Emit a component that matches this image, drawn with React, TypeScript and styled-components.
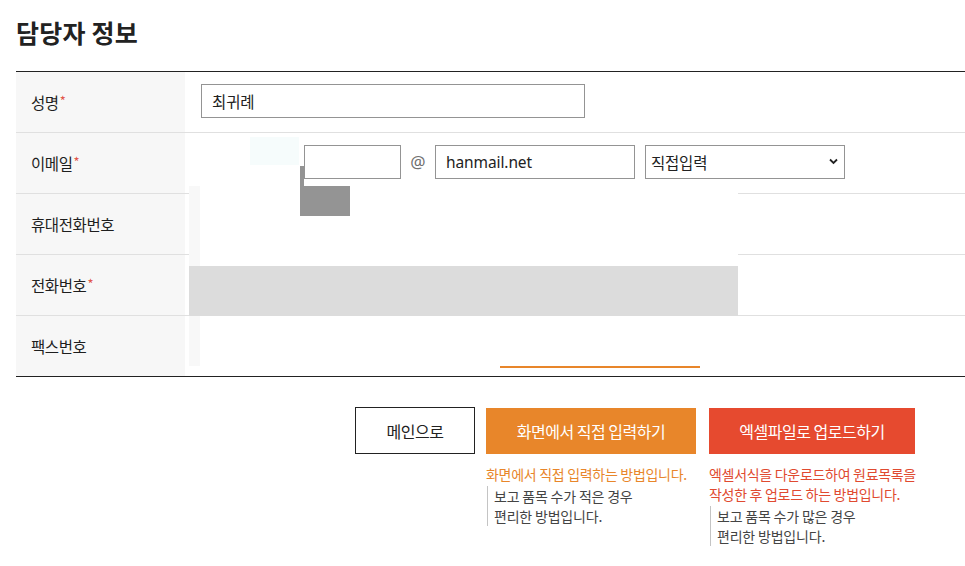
import React from "react";
import styled, { createGlobalStyle } from "styled-components";

const GlobalStyle = createGlobalStyle`
  * { box-sizing: border-box; }
  html, body { margin: 0; padding: 0; background: #fff; }
  body {
    font-family: "Noto Sans CJK KR", "Noto Sans", sans-serif;
    color: #222;
  }
`;

const Page = styled.div`
  position: relative;
  width: 965px;
  height: 566px;
  padding: 14px 0 0 16px;
  overflow: hidden;
`;

const Title = styled.h2`
  margin: 0 0 21px;
  font-size: 25px;
  line-height: 36px;
  font-weight: 700;
  letter-spacing: 0.2px;
  color: #222;
`;

const Table = styled.div`
  border-top: 1px solid #222;
  border-bottom: 1px solid #222;
`;

const Row = styled.div`
  display: grid;
  grid-template-columns: 169px 1fr;
  height: 61px;
  border-bottom: 1px solid #e0e0e0;
  &:last-child {
    height: 60px;
    border-bottom: none;
  }
`;

const Label = styled.div`
  display: flex;
  align-items: center;
  padding-left: 15px;
  background: #f7f7f7;
  font-size: 15.5px;
  letter-spacing: -0.4px;
  color: #1e1e1e;
`;

const Required = styled.span`
  color: #e2564a;
  font-size: 13px;
  margin-left: 1px;
  position: relative;
  top: -2px;
`;

const Value = styled.div`
  display: flex;
  align-items: flex-start;
  padding: 12px 0 0 16px;
`;

const TextInput = styled.input<{ $width: number; $offset?: number }>`
  width: ${(p) => p.$width}px;
  height: 34px;
  margin-left: ${(p) => p.$offset ?? 0}px;
  padding: 0 10px;
  border: 1px solid #949494;
  border-radius: 0;
  background: #fff;
  font-family: "Noto Sans", "Noto Sans CJK KR", sans-serif;
  font-size: 15.5px;
  letter-spacing: -0.1px;
  color: #222;
  outline: none;
`;

const At = styled.span`
  width: 34px;
  height: 34px;
  line-height: 33px;
  text-align: center;
  font-family: "Noto Sans", sans-serif;
  font-size: 17px;
  color: #707070;
`;

const SelectWrap = styled.div`
  position: relative;
  width: 200px;
  height: 34px;
  margin-left: 10px;
`;

const Select = styled.select`
  appearance: none;
  width: 100%;
  height: 100%;
  padding: 0 0 0 5px;
  border: 1px solid #949494;
  border-radius: 0;
  background: #fff;
  font-family: "Noto Sans CJK KR", sans-serif;
  font-size: 15.5px;
  letter-spacing: -0.2px;
  color: #222;
  outline: none;
`;

const Chevron = styled.svg`
  position: absolute;
  right: 7px;
  top: 13px;
  width: 9px;
  height: 7px;
  pointer-events: none;
`;

/* Fragments of a layer stacked above the form */
const Layer = styled.div<{ $x: number; $y: number; $w: number; $h: number; $bg: string }>`
  position: absolute;
  left: ${(p) => p.$x}px;
  top: ${(p) => p.$y}px;
  width: ${(p) => p.$w}px;
  height: ${(p) => p.$h}px;
  background: ${(p) => p.$bg};
`;

const Panel = styled.div`
  position: absolute;
  left: 189px;
  top: 186px;
  width: 549px;
  height: 180px;
  display: flex;
  flex-direction: column;
  background: #fff;
`;

const PanelSection = styled.div<{ $h: number }>`
  height: ${(p) => p.$h}px;
  border-left: 11px solid #f8f8f8;
  background: #fff;
`;

const PanelBand = styled.div`
  height: 50px;
  background: #dcdcdc;
`;

const Actions = styled.div`
  display: flex;
  align-items: flex-start;
  margin-top: 30px;
  padding-left: 339px;
`;

const ActionCol = styled.div<{ $w: number; $gap: number }>`
  display: flex;
  flex-direction: column;
  width: ${(p) => p.$w}px;
  margin-right: ${(p) => p.$gap}px;
`;

const Button = styled.button<{ $variant: "plain" | "orange" | "red" }>`
  display: flex;
  align-items: center;
  justify-content: center;
  width: 100%;
  height: ${(p) => (p.$variant === "plain" ? 47 : 46)}px;
  margin-top: ${(p) => (p.$variant === "plain" ? 0 : 1)}px;
  padding: 0;
  border: ${(p) => (p.$variant === "plain" ? "1px solid #222" : "none")};
  border-radius: 0;
  background: ${(p) =>
    p.$variant === "orange" ? "#e8862a" : p.$variant === "red" ? "#e64a2f" : "#fff"};
  color: ${(p) => (p.$variant === "plain" ? "#222" : "#fff")};
  font-family: "Noto Sans CJK KR", sans-serif;
  font-size: 16px;
  letter-spacing: -0.5px;
  cursor: pointer;
`;

const Desc = styled.p<{ $color: string }>`
  margin: 10px 0 0;
  font-size: 14px;
  line-height: 20px;
  letter-spacing: -0.3px;
  color: ${(p) => p.$color};
  white-space: nowrap;
`;

const Note = styled.p`
  margin: 2px 0 0 1px;
  padding-left: 6px;
  border-left: 1px solid #c4c4c4;
  font-size: 14px;
  line-height: 20px;
  letter-spacing: -0.2px;
  color: #444;
  white-space: nowrap;
`;

export default function App() {
  return (
    <>
      <GlobalStyle />
      <Page>
        <Title>담당자 정보</Title>
        <Table>
          <Row>
            <Label>
              성명<Required>*</Required>
            </Label>
            <Value>
              <TextInput $width={384} defaultValue="최귀례" />
            </Value>
          </Row>
          <Row>
            <Label>
              이메일<Required>*</Required>
            </Label>
            <Value>
              <TextInput $width={97} $offset={103} defaultValue="" />
              <At>@</At>
              <TextInput $width={200} defaultValue="hanmail.net" />
              <SelectWrap>
                <Select defaultValue="direct">
                  <option value="direct">직접입력</option>
                  <option value="naver">naver.com</option>
                  <option value="hanmail">hanmail.net</option>
                </Select>
                <Chevron viewBox="0 0 9 7">
                  <path d="M1 1.5 L4.5 5 L8 1.5" fill="none" stroke="#222" strokeWidth="1.8" />
                </Chevron>
              </SelectWrap>
            </Value>
          </Row>
          <Row>
            <Label>휴대전화번호</Label>
            <Value />
          </Row>
          <Row>
            <Label>
              전화번호<Required>*</Required>
            </Label>
            <Value />
          </Row>
          <Row>
            <Label>팩스번호</Label>
            <Value />
          </Row>
        </Table>

        <Actions>
          <ActionCol $w={120} $gap={11}>
            <Button $variant="plain">메인으로</Button>
          </ActionCol>
          <ActionCol $w={210} $gap={13}>
            <Button $variant="orange">화면에서 직접 입력하기</Button>
            <Desc $color="#e8862a">화면에서 직접 입력하는 방법입니다.</Desc>
            <Note>
              보고 품목 수가 적은 경우
              <br />
              편리한 방법입니다.
            </Note>
          </ActionCol>
          <ActionCol $w={206} $gap={0}>
            <Button $variant="red">엑셀파일로 업로드하기</Button>
            <Desc $color="#e04a30">
              엑셀서식을 다운로드하여 원료목록을
              <br />
              작성한 후 업로드 하는 방법입니다.
            </Desc>
            <Note>
              보고 품목 수가 많은 경우
              <br />
              편리한 방법입니다.
            </Note>
          </ActionCol>
        </Actions>

        <Layer $x={250} $y={137} $w={49} $h={28} $bg="#f6fcfc" />
        <Panel>
          <PanelSection $h={80} />
          <PanelBand />
          <PanelSection $h={50} />
        </Panel>
        <Layer $x={300} $y={166} $w={4} $h={20} $bg="#949494" />
        <Layer $x={300} $y={186} $w={50} $h={30} $bg="#949494" />
        <Layer $x={500} $y={366} $w={200} $h={2} $bg="#e8862a" />
      </Page>
    </>
  );
}
